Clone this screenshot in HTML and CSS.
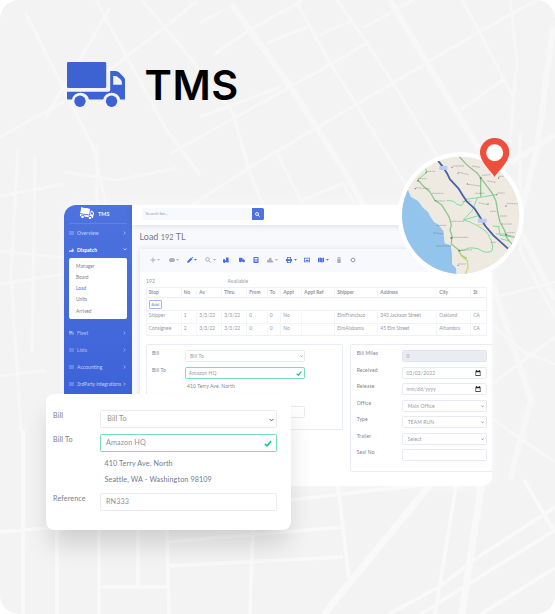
FILE: index.html
```html
<!DOCTYPE html>
<html lang="en">
<head>
<meta charset="utf-8">
<title>TMS</title>
<link rel="stylesheet" href="styles.css">
</head>
<body>
<svg class="defs" width="0" height="0">
  <defs>
    <symbol id="truck" viewBox="0 0 176 136">
      <path d="M4 0H114Q118 0 118 4V74Q118 78 114 78H4Q0 78 0 74V4Q0 0 4 0Z"/>
      <path fill-rule="evenodd" d="M130 27H146Q153 27 158 32L171 46Q176 52 176 59V110Q176 113 172 113H160A26 26 0 0 0 109 113H66A26 26 0 0 0 15 113H3Q0 113 0 110V89H124Q130 89 130 83ZM139 42V68H165V60Q165 57 162 53L153 45Q150 42 146 42Z"/>
      <circle cx="39" cy="118" r="17"/><circle cx="134" cy="118" r="17"/>
    </symbol>
    <symbol id="check" viewBox="0 0 12 10"><path d="M1.3 5.4 4.5 8.5 10.7 1.4" fill="none" stroke="#1cc88a" stroke-width="2.5"/></symbol>
    <symbol id="down" viewBox="0 0 8 6"><path d="M1 1.2 4 4.4 7 1.2" fill="none" stroke="#555" stroke-width="1.5"/></symbol>
    <symbol id="right" viewBox="0 0 6 8"><path d="M1.5 1 4.5 4 1.5 7" fill="none" stroke="currentColor" stroke-width="1.4"/></symbol>
    <symbol id="cal" viewBox="0 0 12 12"><path fill-rule="evenodd" d="M1 1.5H2.5V0H4V1.5H8V0H9.5V1.5H11V12H1ZM2.3 4.5V10.7H9.7V4.5Z" fill="#222"/></symbol>
    <symbol id="caret" viewBox="0 0 6 4"><path d="M0 0H6L3 3.6Z"/></symbol>
    <symbol id="lines" viewBox="0 0 12 10"><path d="M.5.5H11.5V9.5H.5ZM3.5.5V9.5M5 3H10M5 5H10M5 7H10" fill="none" stroke="currentColor"/></symbol>
    <symbol id="glass" viewBox="0 0 12 12"><g fill="none" stroke="currentColor" stroke-width="2"><circle cx="4.8" cy="4.8" r="3.6"/><path d="M7.5 7.5 11.2 11.2"/></g></symbol>
  </defs>
</svg>

<main class="stage">
  <svg class="streets" viewBox="0 0 555 614">
    <g class="minor">
      <path d="M0 137 78 94 170 23 198 0M96 0 166 129 200 175M25 12 92 145 106 204M142 0 188 55 233 113 250 173 263 205M110 8 46 117"/>
      <path d="M297 3 330 63 358 107 407 187M337 0 367 43 393 83 438 157M462 0 480 33 513 97M510 0 517 60 510 143"/>
      <path d="M170 154 200 137 333 63 367 43M170 218 200 200 250 167 313 130 393 83 477 33 537 0M213 55 253 28 303 0M267 43 307 27M320 35 353 20M363 28 413 0M200 23 223 10M460 110 503 80M200 117 280 87M277 153 303 205M303 200 343 183 355 205"/>
      <path d="M0 196 64 184M0 251 64 258M0 284 64 274M18 149 11 274 21 431M35 157 32 352M0 376 46 370M97 145V204M64 172 117 180 177 168"/>
      <path d="M492 298 555 282M492 325 524 352 555 364M492 384 555 337M492 419 555 462M520 133V251L555 317"/>
    </g>
    <g class="major"><path d="M232 5 288 83 345 172 363 205M390 0 427 63 480 150 530 250 555 300M553 27 537 150 520 215M495 172 555 135M492 282 531 400 510 480"/></g>
    <g class="low">
      <path d="M23 430V614M57 400V614M99 500V614M138 500V587M166 500 169 614M253 520 250 614M0 532 130 521M166 542 343 527M166 566 343 557M101 587H168M338 486 349 578M290 500 430 484M457 480 435 614M389 614 439 587 474 560 555 507M421 614 467 585 555 530M481 614 555 568M524 480 555 533"/>
      <path class="wide" d="M434 480 324 614M482 480 462 614"/>
    </g>
  </svg>

  <header class="brand">
    <svg class="brand-truck"><use href="#truck"/></svg>
    <h1>TMS</h1>
  </header>

  <section class="app">
    <nav class="side">
      <div class="side-brand"><svg class="side-truck"><use href="#truck"/></svg><b>TMS</b></div>
      <a class="nav"><svg class="ni"><use href="#lines"/></svg><span>Overview</span><svg class="nr"><use href="#right"/></svg></a>
      <a class="nav on"><svg class="ni" viewBox="0 0 12 10"><path fill="currentColor" d="M0 6H4L7 5V1H9V5L12 3V8H10A2 2 0 0 1 6 9H4A2 2 0 0 1 0 8Z"/></svg><span>Dispatch</span><svg class="nd" viewBox="0 0 8 6"><path d="M1 1 4 4 7 1" fill="none" stroke="currentColor" stroke-width="1.3"/></svg></a>
      <div class="sub"><a>Manager</a><a>Board</a><a class="cur">Load</a><a>Units</a><a>Arrived</a></div>
      <a class="nav dim"><svg class="ni"><use href="#truck" fill="currentColor"/></svg><span>Fleet</span><svg class="nr"><use href="#right"/></svg></a>
      <a class="nav dim"><svg class="ni"><use href="#lines"/></svg><span>Lists</span><svg class="nr"><use href="#right"/></svg></a>
      <a class="nav"><svg class="ni"><use href="#lines"/></svg><span>Accounting</span><svg class="nr"><use href="#right"/></svg></a>
      <a class="nav"><svg class="ni"><use href="#lines"/></svg><span class="long">3rdParty Integrations</span><svg class="nr"><use href="#right"/></svg></a>
    </nav>
    <div class="main">
      <div class="top"><div class="search">Search for...</div><div class="go"><svg><use href="#glass"/></svg></div></div>
      <h2>Load <small>192</small> TL</h2>
      <div class="panel">
        <div class="tools">
          <i class="g"><svg viewBox="0 0 12 12"><path d="M6 1V11M1 6H11" stroke="currentColor" stroke-width="2"/></svg><svg class="c"><use href="#caret"/></svg></i>
          <i class="g"><svg viewBox="0 0 12 12"><path d="M3 2H9L12 5V8L9 10H5L2 11.5 2.5 9.5 0 8V5Z"/></svg><svg class="c"><use href="#caret"/></svg></i>
          <i><svg viewBox="0 0 12 12"><path d="M0 12 1 8 8 1 11 4 4 11ZM9 0 12 3V1L11 0Z"/></svg><svg class="c"><use href="#caret"/></svg></i>
          <i class="g"><svg><use href="#glass"/></svg><svg class="c"><use href="#caret"/></svg></i>
          <i><svg viewBox="0 0 14 12"><path d="M0 4H5V7H7V0H13V9H14V11H12A1.6 1.6 0 0 1 9 11H5A2 2 0 0 1 1 11H0Z"/></svg></i>
          <i><svg viewBox="0 0 14 12"><path d="M0 1H8V4H11L14 7V10H12.5A1.8 1.8 0 0 1 9 10H5A1.8 1.8 0 0 1 1.5 10H0Z"/></svg></i>
          <i><svg viewBox="0 0 12 12"><path fill-rule="evenodd" d="M1 0H11V12H1ZM3 2V5H9V2ZM3 7V8H9V7ZM3 9V10H9V9Z"/></svg></i>
          <i class="g"><svg viewBox="0 0 12 12"><path d="M0 11V7L2 5 4 6V3L7 1 9 3V6L12 8V11Z"/></svg><svg class="c"><use href="#caret"/></svg></i>
          <i><svg viewBox="0 0 12 12"><path fill-rule="evenodd" d="M2 0H10V4H12V9H10V12H2V9H0V4H2ZM3.5 1.5V4.5H8.5V1.5ZM3.5 8V10.5H8.5V8Z"/></svg><svg class="c"><use href="#caret"/></svg></i>
          <i><svg viewBox="0 0 12 12"><path fill-rule="evenodd" d="M0 1.5H12V10.5H0ZM1.5 3V9H10.5V3ZM2.5 8 5 5 6.5 6.5 8 4.5 9.8 8Z"/></svg></i>
          <i><svg viewBox="0 0 12 12"><path d="M0 2 3.4 1V10L0 11ZM4.1 1 7.9 2V11L4.1 10ZM8.6 2 12 1V10L8.6 11Z"/></svg><svg class="c"><use href="#caret"/></svg></i>
          <i class="g"><svg viewBox="0 0 12 12"><path d="M2 1H4.5V0H7.5V1H10V2.5H2ZM2.5 3.3H9.5V12H2.5Z"/></svg></i>
          <i class="g"><svg viewBox="0 0 12 12"><circle cx="6" cy="6" r="3.4" fill="none" stroke="currentColor" stroke-width="2"/><path d="M6 0V2.5M6 9.5V12M0 6H2.5M9.5 6H12M1.8 1.8 3.5 3.5M8.5 8.5 10.2 10.2M10.2 1.8 8.5 3.5M3.5 8.5 1.8 10.2" stroke="currentColor" stroke-width="1.5"/></svg></i>
        </div>
        <div class="status"><span>192</span><span>Available</span></div>
        <div class="grid">
          <div class="tr th"><span>Stop</span><span>No</span><span>Av</span><span>Thru</span><span>From</span><span>To</span><span>Appt</span><span>Appt Ref</span><span>Shipper</span><span>Address</span><span>City</span><span>St</span></div>
          <div class="add"><button>Add</button></div>
          <div class="tr"><span>Shipper</span><span>1</span><span>3/3/22</span><span>3/3/22</span><span>0</span><span>0</span><span>No</span><span></span><span>ElmFrancisco</span><span>343 Jackson Street</span><span>Oakland</span><span>CA</span></div>
          <div class="tr"><span>Consignee</span><span>2</span><span>3/3/22</span><span>3/3/22</span><span>0</span><span>0</span><span>No</span><span></span><span>ElmAlabama</span><span>45 Elm Street</span><span>Alhambra</span><span>CA</span></div>
        </div>
        <div class="forms">
          <div class="box left">
            <div class="row"><label>Bill</label><div class="in sel">Bill To<svg class="dn"><use href="#down"/></svg></div></div>
            <div class="row"><label>Bill To</label><div class="in ok">Amazon HQ<svg class="ck"><use href="#check"/></svg></div></div>
            <div class="addr">410 Terry Ave. North</div>
            <div class="row last"><label></label><div class="in"></div></div>
          </div>
          <div class="box rt">
            <div class="row"><label>Bill Miles</label><div class="in off">0</div></div>
            <div class="row"><label>Received</label><div class="in">03/03/2022<svg class="cal"><use href="#cal"/></svg></div></div>
            <div class="row"><label>Release</label><div class="in">mm/dd/yyyy<svg class="cal"><use href="#cal"/></svg></div></div>
            <div class="row"><label>Office</label><div class="in sel">Main Office<svg class="dn"><use href="#down"/></svg></div></div>
            <div class="row"><label>Type</label><div class="in sel">TEAM RUN<svg class="dn"><use href="#down"/></svg></div></div>
            <div class="row"><label>Trailer</label><div class="in sel">Select<svg class="dn"><use href="#down"/></svg></div></div>
            <div class="row"><label>Seal No</label><div class="in"></div></div>
          </div>
        </div>
      </div>
    </div>
  </section>

  <section class="card">
    <div class="row"><label>Bill</label><div class="in sel">Bill To<svg class="dn"><use href="#down"/></svg></div></div>
    <div class="row"><label>Bill To</label><div class="in ok">Amazon HQ<svg class="ck"><use href="#check"/></svg></div></div>
    <p>410 Terry Ave. North</p>
    <p class="p2">Seattle, WA - Washington 98109</p>
    <div class="row"><label>Reference</label><div class="in">RN333</div></div>
  </section>

  <svg class="map" viewBox="0 0 435 450">
    <clipPath id="disc"><circle cx="212" cy="256" r="176"/></clipPath>
    <circle cx="212" cy="256" r="189" fill="#fff"/>
    <g clip-path="url(#disc)" fill="none" stroke-linejoin="round">
      <path fill="#eeeae2" d="M0 60H400V450H0Z"/>
      <path fill="#93c5ec" d="M30 170 54 180 62 200 84 213 100 234 114 246 120 258 132 276 146 285 160 303 162 322 164 340 182 346 186 372 186 402 198 415 200 450H0V170Z"/>
      <path stroke="#7fdc9c" stroke-width="3" d="M122 92 106 112 110 128 84 148M170 212Q190 210 200 222L214 227 228 208 270 202 318 194M262 203 248 240 220 270 240 276 264 288Q296 306 298 322 312 342 306 362 290 374 264 356 232 350 224 360L207 362M220 270 262 258 276 268M320 290 326 290 330 316 366 320M318 312H348M332 326 360 334M308 288 328 290"/>
      <path stroke="#8cc98c" stroke-width="4" d="M84 150 96 164 120 186 134 210 156 226 178 262 184 286 180 300 186 318 184 342 206 360 214 376 230 386"/>
      <path stroke="#c7dc74" stroke-width="4" d="M206 360 214 378 232 392 234 412 226 432"/>
      <path stroke="#8fc48f" stroke-width="4" d="M206 78 230 104 262 130 274 146 292 170 308 192 318 214 324 250 330 276 344 302 352 326 374 352M272 146V200M346 314 374 322"/>
      <path stroke="#f1d48c" stroke-width="3" d="M256 284H286M352 352 372 350"/>
      <path stroke="#4a62a6" stroke-width="5.5" d="M144 92 158 110 170 128 180 148 206 176 218 196 230 214 254 236 268 258 286 288 310 316 354 356"/>
      <path fill="#b9c9f5" d="M148 108H172V120H148ZM264 266H290V278H264Z"/>
      <g fill="#77736f"><circle cx="84" cy="152" r="2.5"/><circle cx="76" cy="176" r="2"/><circle cx="108" cy="128" r="2"/><circle cx="186" cy="112" r="2"/><circle cx="204" cy="130" r="2"/><circle cx="232" cy="162" r="2"/><circle cx="272" cy="144" r="3"/><circle cx="326" cy="144" r="2"/><circle cx="320" cy="194" r="2"/><circle cx="348" cy="228" r="2"/><circle cx="136" cy="212" r="2"/><circle cx="184" cy="324" r="3"/><circle cx="208" cy="362" r="3"/><circle cx="204" cy="406" r="2"/><circle cx="348" cy="314" r="3"/><circle cx="294" cy="222" r="2"/></g>
      <path stroke="#55504c" stroke-opacity=".45" stroke-width="2.2" stroke-dasharray="5 1 3 1" d="M84 146H110M78 173 120 177M108 124H136M188 108H222M204 126 236 134M246 108 270 112M234 163 270 168M276 136 302 134M292 153 318 157M326 139H342M322 189H344M350 220 386 222M256 190H284M126 190H160M138 213H166M216 214H244M266 218 292 224M300 244H320M330 258H352M334 282H366M184 274H222M140 286H170M130 308 160 312M186 322H236M138 348H184M212 360H246M302 337H318M204 402H228M350 308H374"/>
    </g>
    <path fill="#ee4f3d" fill-rule="evenodd" d="M314 141C307 126 270 98 270 67A44 43 0 0 1 358 67C358 98 321 126 314 141Z"/>
    <circle cx="314" cy="68" r="25.5" fill="#fff"/>
  </svg>
</main>
</body>
</html>
```
FILE: styles.css
```css
* { box-sizing: border-box; }
body { margin: 0; background: #fff; font-family: Lato, "Open Sans", sans-serif; }
svg { display: block; flex: none; }
.defs { position: absolute; }
.stage { position: relative; width: 555px; height: 614px; background: #f3f3f3; border-radius: 19px; overflow: hidden; padding-top: 62px; }
.streets { position: absolute; inset: 0; width: 555px; height: 614px; fill: none; stroke: #f7f7f7; stroke-linejoin: round; }
.minor { stroke-width: 3; }
.major { stroke-width: 6; }
.low { stroke-width: 3.6; stroke: #f9f9f9; }
.wide { stroke-width: 7; }

.brand { position: relative; display: flex; align-items: flex-start; height: 143px; padding-left: 66.5px; }
.brand-truck { width: 58.5px; height: 45.3px; fill: #3d63d2; }
.brand h1 { margin: 1.5px 0 0 19.5px; font: 600 41.5px/42px Inter, sans-serif; letter-spacing: .5px; color: #000; }

.app { position: relative; display: flex; width: 428px; height: 280.5px; margin-left: 64px; border-radius: 12px 0 10px 0; background: #fff; overflow: hidden; box-shadow: 0 0 14px #fff8; font-size: 5px; color: #9698a5; }
.side { width: 68px; flex: none; background: linear-gradient(#4e73df, #3d63d8 65%); color: #ffffffb0; }
.side-brand { display: flex; align-items: center; height: 19px; margin: 0 5px; padding: 0 0 1px 11px; gap: 4px; border-bottom: 1px solid #ffffff20; color: #ffffffe0; font-size: 5.4px; }
.side-brand b { font-weight: 900; }
.side-truck { width: 14px; height: 11px; fill: #fff; transform: rotate(9deg); }
.nav { display: flex; align-items: center; height: 17.1px; padding: 0 5px; color: #ffffffb0; }
.nav span { flex: 1; letter-spacing: .06px; white-space: nowrap; }
.nav .long { font-size: 4.8px; letter-spacing: -.02px; }
.nav.on { color: #fff; font-weight: 700; }
.nav.dim { color: #ffffff98; }
.ni { width: 5px; height: 4px; margin-right: 3px; opacity: .8; }
.nr { width: 3px; height: 4px; margin-right: 1px; }
.nd { width: 4px; height: 3px; }
.sub { width: 58px; height: 61px; margin: .2px 5px 5px; padding: 2.8px 7px; border-radius: 2px; background: #fff; color: #7d7f8b; }
.sub a { display: block; height: 11.1px; line-height: 11.1px; font-size: 4.8px; }
.sub .cur { color: #4e73df; }

.main { flex: 1; min-width: 0; background: #f8f9fc; }
.top { display: flex; height: 20px; padding: 3.3px 0 0 10px; background: #fff; box-shadow: 0 1px 6px #3a3b4526; }
.search { width: 109.5px; height: 12px; padding-left: 3.5px; background: #f8f9fc; border-radius: 2px 0 0 2px; font-size: 4.4px; line-height: 11.5px; }
.go { display: grid; place-items: center; width: 12.5px; height: 12px; background: #4e73df; color: #fff; border-radius: 0 1.5px 1.5px 0; }
.go svg { width: 5px; height: 5px; }
h2 { margin: 6.3px 0 6.2px 7.5px; font-size: 9px; line-height: 12px; height: 12px; font-weight: 400; color: #777986; white-space: nowrap; }
h2 small { font-size: 7.4px; }
.panel { width: 370px; height: 260px; margin-left: 8px; background: #fff; box-shadow: 0 0 5px #3a3b4522; }
.tools { display: grid; grid-template-columns: 19px 18px 18.5px 18px 15.5px 14.5px 14px 19px 17.5px 14.5px 18px 13.5px 12px; height: 22.5px; padding: 0 0 1.5px 9.5px; background: #f8f9fc; align-items: center; color: #4a70e2; fill: currentColor; }
.tools i { display: flex; align-items: center; gap: 1.5px; }
.tools i svg { width: 6px; height: 6px; }
.tools i .c { width: 3px; height: 2px; }
.tools .g { color: #adafb8; }
.status { display: grid; grid-template-columns: 81.5px 1fr; height: 15px; padding: 4px 0 0 6px; line-height: 10px; letter-spacing: .12px; }
.grid { width: 341px; margin-left: 5.5px; border: 1px solid #f0f1f6; }
.tr { display: grid; grid-template-columns: 35px 15.5px 25px 25px 20.5px 13.5px 21px 33px 43px 59px 34px 14.5px; height: 12.2px; line-height: 8.5px; border-top: 1px solid #f2f3f7; font-size: 4.9px; white-space: nowrap; }
.tr.th { height: 9.5px; line-height: 8.5px; border: 0; font-weight: 700; color: #9193a0; }
.tr span { padding-left: 2.3px; border-right: 1px solid #f4f5f9; }
.tr span:last-child { border: 0; }
.add { height: 13px; padding: 1.2px 0 0 2px; border-top: 1px solid #ebedf3; }
.add button { display: block; width: 13.5px; height: 9px; padding: 0; border: 1px solid #a2b6ef; border-radius: 1px; background: #fff; color: #6d8be5; font: 4.6px/7px Lato, sans-serif; }
.forms { display: flex; gap: 7px; margin: 8.5px 0 0 5.5px; align-items: flex-start; }
.box { border: 1px solid #eaecf3; border-radius: 1.5px; padding: 5px 5.5px; }
.left { width: 198px; height: 86px; }
.rt { width: 160px; height: 128px; }
.row { display: flex; }
.box .row { height: 16.5px; }
.box label { color: #80828f; width: 32.5px; height: 8px; line-height: 6.5px; font-size: 5px; letter-spacing: .15px; }
.rt label { width: 45.5px; }
.in { position: relative; border: 1px solid #e8eaf1; border-radius: 1.5px; background: #fff; white-space: nowrap; }
.box .in { width: 120.5px; height: 12px; padding-left: 3.3px; font-size: 4.9px; line-height: 10.5px; letter-spacing: .15px; }
.box .sel { padding-left: 4.5px; }
.rt .in { width: 84.5px; }
.box .off { background: #eaecf4; border-color: #e2e5ee; }
.box .ok, .card .ok { border-color: #74dfb8; }
.addr { height: 8px; padding-left: 35px; line-height: 7px; color: #7a8799; letter-spacing: .1px; }
.box .last { margin-top: 15px; }
.in svg { position: absolute; }
.box .dn { width: 3px; height: 2.5px; right: 1.5px; top: 4px; }
.box .ck { width: 6px; height: 5px; right: 2px; top: 2.7px; }
.box .cal { width: 6px; height: 6px; right: 4.5px; top: 2px; }

.card { position: absolute; left: 46px; top: 393.5px; width: 245px; height: 136.5px; padding: 16.5px 7px; background: #fff; border-radius: 8px; box-shadow: 0 17px 26px -4px #00000028; color: #8e909d; font-size: 7.2px; letter-spacing: .12px; }
.card .row { height: 24px; }
.card label { width: 47px; line-height: 11px; color: #7b7d8a; }
.card .in { width: 176.5px; height: 17.8px; line-height: 16px; padding-left: 5px; }
.card .sel { padding-left: 6.2px; }
.card p { margin: 0; padding-left: 51.5px; height: 15.5px; line-height: 11px; color: #6d7c91; }
.card .p2 { height: 19.3px; }
.card .dn { width: 5px; height: 4px; right: 1.5px; top: 6.5px; }
.card .ck { width: 8px; height: 7px; right: 4px; top: 4.8px; }

.map { position: absolute; left: 390px; top: 130px; width: 145px; height: 150px; }
```
